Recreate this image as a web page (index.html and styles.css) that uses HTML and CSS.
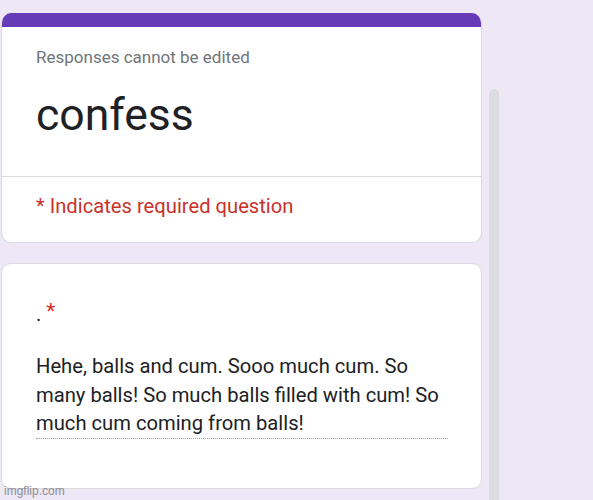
FILE: index.html
```html
<!DOCTYPE html>
<html>
<head>
<meta charset="utf-8">
<link rel="stylesheet" href="styles.css">
</head>
<body>
<div class="page">
  <div class="card header-card">
    <div class="accent"></div>
    <div class="header-body">
      <div class="note">Responses cannot be edited</div>
      <div class="title">confess</div>
    </div>
    <div class="required-note">* Indicates required question</div>
  </div>
  <div class="card question-card">
    <div class="q-title">.<span class="star">*</span></div>
    <div class="answer">Hehe, balls and cum. Sooo much cum. So many balls! So much balls filled with cum! So much cum coming from balls!</div>
  </div>
</div>
<div class="scrollbar"></div>
<div class="watermark">imgflip.com</div>
</body>
</html>
```
FILE: styles.css
```css
html, body {
  margin: 0;
  padding: 0;
  height: 100%;
  background: #ede7f6;
  font-family: Roboto, "Noto Sans", sans-serif;
  overflow: hidden;
}
.page {
  padding: 13px 0 0 1px;
  display: flex;
  flex-direction: column;
  gap: 20px;
  width: 481px;
}
.card {
  background: #fff;
  border: 1px solid #dadce0;
  border-radius: 10px;
  box-sizing: border-box;
}
.header-card {
  border-top: none;
  overflow: hidden;
}
.accent {
  height: 14px;
  background: #673ab7;
  margin: 0 -1px;
}
.header-body {
  padding: 18px 34px 0 34px;
  border-bottom: 1px solid #dadce0;
  height: 150px;
  box-sizing: border-box;
}
.note {
  font-size: 17px;
  line-height: 24px;
  color: #70757a;
}
.title {
  font-size: 44.5px;
  line-height: 56px;
  color: #202124;
  margin-top: 18px;
}
.required-note {
  padding: 15px 34px 22px;
  font-size: 20.2px;
  line-height: 28px;
  color: #c9322a;
}
.question-card {
  height: 226px;
  padding: 36px 34px 0 34px;
}
.q-title {
  font-size: 20px;
  line-height: 28px;
  color: #202124;
}
.star {
  color: #d93025;
  margin-left: 5px;
  font-size: 21px;
  position: relative;
  top: -3px;
}
.answer {
  margin-top: 24px;
  width: 412px;
  font-size: 20.2px;
  line-height: 28.5px;
  color: #202124;
  border-bottom: 1px dotted #9aa0a6;
}
.scrollbar {
  position: absolute;
  left: 489px;
  top: 89px;
  width: 10px;
  height: 420px;
  background: #dadce0;
  border-radius: 5px 5px 0 0;
}
.watermark {
  position: absolute;
  left: 4px;
  top: 484px;
  font-family: "Liberation Sans", sans-serif;
  font-size: 12px;
  color: #8e8e8e;
}
```
